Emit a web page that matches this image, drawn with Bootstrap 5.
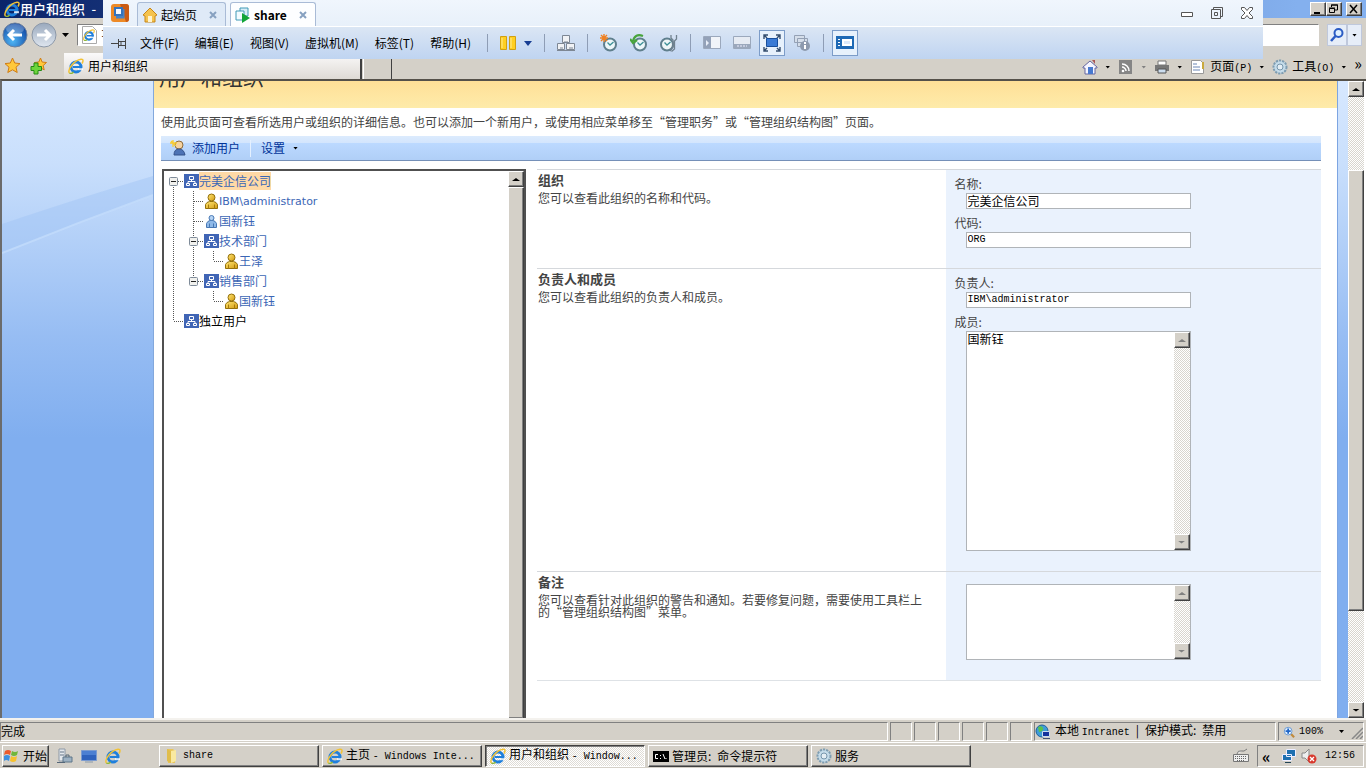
<!DOCTYPE html>
<html lang="zh-CN">
<head>
<meta charset="utf-8">
<meta name="viewport" content="width=device-width, initial-scale=1">
<title>用户和组织 - Windows Internet Explorer</title>
<link href="https://cdn.jsdelivr.net/npm/bootstrap@5.3.0/dist/css/bootstrap.min.css" rel="stylesheet">
<style>
  body { font: 12px/16px "Noto Sans CJK SC", "Liberation Sans", sans-serif; color: #000; background: #d4d0c8; }
  a { text-decoration: none; color: inherit; }
  svg { display: block; flex: none; }
  button { font: inherit; color: inherit; padding: 0; border: 0; background: none; flex: none; }
  input, textarea, select { font: inherit; color: #000; border: 0; outline: 0; border-radius: 0; resize: none; }
  .mono { font-family: "Liberation Mono", "Noto Sans CJK SC", monospace; font-size: 10px; }
  .ico { width: 16px; height: 16px; }
  .caret { width: 5px; height: 3px; background: currentColor; clip-path: polygon(0 0, 100% 0, 50% 100%); flex: none; }

  /* classic raised and sunken edges */
  .raised { background: #d4d0c8; border: 1px solid; border-color: #fff #404040 #404040 #fff; box-shadow: inset -1px -1px #808080; }
  .pressed { background: repeating-conic-gradient(#fff 0 25%, #dedbd5 0 50%) 0 0/2px 2px; border: 1px solid; border-color: #404040 #fff #fff #404040; box-shadow: inset 1px 1px #808080; }
  .sunken { border: 1px solid; border-color: #808080 #fff #fff #808080; }

  /* browser chrome */
  .titlebar { height: 18px; background: linear-gradient(90deg, #0a246a, #84b0ee 95%); color: #fff; font-size: 13px; font-weight: 500; line-height: 18px; }
  .capbtn { width: 16px; height: 14px; }
  .addressrow { height: 34px; }
  .address { width: 160px; height: 22px; }
  .searchbox { width: 150px; height: 22px; background: #fff; }
  .searchbtn { height: 22px; border: 1px solid #bfc8dc; background: #e6edf8; }
  .tabrow { height: 27px; }
  .pagetab { width: 298px; height: 26px; background: linear-gradient(#fbfafa, #dedad5); border-right: 2px solid #404040; }
  .newtab { width: 29px; height: 26px; margin-left: 1px; border-left: 1px solid #fff; border-right: 1px solid #404040; }
  .commands { padding-top: 3px; }
  .commands .caret { margin: 0 8px 0 7px; }

  /* virtual machine bar floating above the browser */
  .vmbar { left: 103px; right: 103px; top: 0; height: 59px; z-index: 5; background: linear-gradient(#f0f6fd, #dde9f6); }
  .vmtop { height: 26px; }
  .vmtab { height: 24px; border: 1px solid #a9bbd6; border-bottom: 0; border-radius: 3px 3px 0 0; background: #dfeaf7; gap: 3px; }
  .vmtab button { margin-left: 9px; }
  .vmtab.current { background: #fdfeff; }
  .vmtools { height: 33px; border-top: 1px solid #fff; background: linear-gradient(#dbe6f4, #bfd4f1); gap: 12px; }
  .vmsep { width: 1px; height: 18px; background: #8e9db5; flex: none; }
  .vmon { width: 26px; height: 26px; margin: 0 -4px; background: #e7f1fc; border: 1px solid #7c9cc8; }
  .vmwin { gap: 18px; margin-right: 10px; }

  /* page */
  .viewport { border-top: 2px solid #55514a; border-left: 2px solid #6b6b6b; background: #fff; padding-right: 2px; }
  .backdrop { background: linear-gradient(#d7e8ff 0, #c9dffc 13%, #97bdf3 40%, #80aeef 56%, #80aeef); padding-right: 10px; }
  .aside { width: 151px; }
  .sheet { background: #fff; border-left: 1px solid #83a8dc; border-right: 1px solid #7da5e2; }
  .banner { height: 27px; background: linear-gradient(#ffe097, #feebaa); overflow: hidden; padding-left: 5px; }
  .banner h1 { font-size: 21px; line-height: 26px; font-weight: 400; margin-top: -18px; color: #333; }
  .inner { padding: 6px 16px 0 7px; color: #444; }
  .toolbar { height: 25px; margin-top: 6px; background: linear-gradient(#dcebfd 0, #d3e5fd 7px, #bcd9ff 7px, #b0cff7 100%); border-bottom: 1px solid #7590b8; color: #003399; padding-left: 9px; gap: 6px; }
  .toolsep { width: 1px; height: 17px; background: #e4f0ff; margin: 0 4px; }
  .panes { gap: 11px; padding-left: 1px; }
  .treebox { flex: 0 0 364px; border: 2px solid #505050; border-bottom: 0; color: #3b66b5; }
  .branch { height: 20px; }
  .branch a { line-height: 18px; }
  .branch .verd { font-family: "DejaVu Sans", sans-serif; font-size: 11px; padding-top: 2px; }
  .branch .chosen { background: #ffd9a6; }
  .cell { width: 20px; height: 20px; }
  .node { width: 15px; height: 16px; }
  .sbar { width: 16px; background: repeating-conic-gradient(#fff 0 25%, #d8d5ce 0 50%) 0 0/2px 2px; flex: none; }
  .sbar button { width: 16px; height: 16px; display: flex; align-items: center; justify-content: center; }
  .up { transform: rotate(180deg); }
  .dim { color: #808080; }
  .section { display: grid; grid-template-columns: 408fr 375fr; border-top: 1px solid #d5d8dc; }
  .section h2 { font-size: 13px; line-height: 18px; font-weight: 700; margin: 1px 0 3px; }
  .section p { line-height: 12px; margin: 0; }
  .about { padding: 0 16px 0 1px; }
  .fields { background: #eaf2fd; padding: 5px 0 20px 9px; }
  .fields label { display: block; line-height: 18px; height: 18px; }
  .box { width: 225px; margin: 0 0 5px 11px; border: 1px solid #b0b4b8; background: #fff; height: 16px; }
  .box input, .box textarea { width: 100%; padding: 0 1px; line-height: 14px; height: 14px; display: block; }
  .box textarea { height: 100%; overflow: hidden; }
  .members { height: 220px; margin-bottom: 0; }
  .notes { height: 76px; margin: 7px 0 0 11px; }

  /* bottom bars */
  .status { height: 24px; border-top: 2px solid #f4f2ee; padding: 2px 2px 2px 0; gap: 2px; }
  .status .sunken { height: 19px; }
  .pane { width: 22px; }
  .taskbar { height: 26px; border-top: 1px solid #fff; padding: 1px 2px; }
  .tasks { gap: 3px; margin-left: 38px; }
  .task { width: 160px; height: 22px; gap: 3px; padding-left: 4px; text-align: left; }
</style>
</head>
<body class="vh-100 d-flex flex-column overflow-hidden position-relative">

<svg class="position-absolute" width="0" height="0" aria-hidden="true">
  <defs>
    <radialGradient id="blu" cx=".4" cy=".75" r=".8"><stop offset="0" stop-color="#4fb6f5"/><stop offset="1" stop-color="#0d3f9c"/></radialGradient>
    <linearGradient id="gry" x2="0" y2="1"><stop offset="0" stop-color="#9aa9bd"/><stop offset="1" stop-color="#dfe6ef"/></linearGradient>
    <linearGradient id="gold" x2="1" y2="1"><stop offset="0" stop-color="#ffe774"/><stop offset="1" stop-color="#d49a10"/></linearGradient>
  </defs>
  <symbol id="ie" viewBox="0 0 16 16"><circle cx="8" cy="9" r="5" fill="none" stroke="#1f7fdc" stroke-width="3"/><path d="M5 9h9" stroke="#1f7fdc" stroke-width="2"/><path d="M10 10.200h5v2h-5z" fill="#fff" opacity=".8"/><path d="M1.500 15C-1 12 6 2 13 1.200c3-.2 2 2.600 1 4.300" fill="none" stroke="#f2c235" stroke-width="1.500"/><path d="M1.500 15c1 .8 3 0 4-1" fill="none" stroke="#8fb83b" stroke-width="1.500"/></symbol>
  <symbol id="folder" viewBox="0 0 16 16"><path d="M3 1h6l2 2v12H4z" fill="#e9c65a"/><path d="M7 3l5-1v11l-5 2z" fill="#f9e9a0"/><path d="M3 1l4 2v12l-4-2z" fill="#e0bd4c"/></symbol>
  <symbol id="gear" viewBox="0 0 16 16"><circle cx="8" cy="8" r="6.500" fill="#c5dcea" stroke="#7e9db2" stroke-width="2" stroke-dasharray="2.200 1"/><circle cx="8" cy="8" r="3" fill="#e4eef4" stroke="#7796ac"/></symbol>
  <symbol id="org" viewBox="0 0 15 16"><path d="M0 1h15v14H0z" fill="#4065b5"/><path d="M5.500 3.500h4v3h-4zM2.500 10.500h3v2h-3zM9.500 10.500h3v2h-3zM7.500 6.500v2M4 10.500v-2h7v2" fill="none" stroke="#fff"/></symbol>
  <symbol id="man" viewBox="0 0 15 16"><path d="M1.500 15.500v-4Q2.500 9 5.500 8.500h4Q12.500 9 13.500 11.500v4z" fill="url(#gold)" stroke="#93700c"/><path d="M4.500 11.500v4M10.500 11.500v4" stroke="#a67c10"/><circle cx="7.500" cy="4.500" r="3.500" fill="url(#gold)" stroke="#93700c"/></symbol>
  <symbol id="man2" viewBox="0 0 15 16"><path d="M2.500 14.500v-4Q3.500 8 6 7.500h3q2.500 .5 3.500 3v4z" fill="#8fb9e8" stroke="#4878b4"/><path d="M5.500 10.500v4M9.500 10.500v4" stroke="#4878b4"/><circle cx="7.500" cy="5" r="2.500" fill="#b5d3f3" stroke="#4878b4"/></symbol>
  <symbol id="tv" viewBox="0 0 20 20"><path d="M9.500 0v20" stroke="#555" stroke-dasharray="1 1"/></symbol>
  <symbol id="tt" viewBox="0 0 20 20"><path d="M9.500 0v20M10 10.500h9" stroke="#555" stroke-dasharray="1 1"/></symbol>
  <symbol id="tl" viewBox="0 0 20 20"><path d="M9.500 0v10M10 10.500h9" stroke="#555" stroke-dasharray="1 1"/></symbol>
  <symbol id="tm" viewBox="0 0 20 20"><path d="M9.500 0v20M10 10.500h10" stroke="#555" stroke-dasharray="1 1"/><rect x="5.500" y="6.500" width="8" height="8" rx="1" fill="#f1f1ee" stroke="#7e8b99"/><path d="M7 10.500h5" stroke="#222"/></symbol>
  <symbol id="tmtop" viewBox="0 0 20 20"><path d="M9.500 14v6M10 10.500h10" stroke="#555" stroke-dasharray="1 1"/><rect x="5.500" y="6.500" width="8" height="8" rx="1" fill="#f1f1ee" stroke="#7e8b99"/><path d="M7 10.500h5" stroke="#222"/></symbol>
  <symbol id="tmend" viewBox="0 0 20 20"><path d="M9.500 0v6M10 10.500h10" stroke="#555" stroke-dasharray="1 1"/><rect x="5.500" y="6.500" width="8" height="8" rx="1" fill="#f1f1ee" stroke="#7e8b99"/><path d="M7 10.500h5" stroke="#222"/></symbol>
  <symbol id="clock" viewBox="0 0 18 18"><circle cx="10" cy="10.500" r="6" fill="#edf6f8" stroke="#5f7f8d" stroke-width="2"/><path d="M7.500 8.500l2.500 2.500 3.500-3" fill="none" stroke="#3c9096" stroke-width="1.300"/></symbol>
</svg>

<!-- browser title, address and tab rows -->
<header class="flex-shrink-0">
  <div class="titlebar d-flex align-items-center ps-1">
    <svg class="ico"><use href="#ie"/></svg><span class="flex-fill">用户和组织&ensp;-</span>
    <div class="d-flex pe-1 text-black">
      <button class="raised capbtn" aria-label="最小化"><svg width="13" height="12"><path d="M3 9h6v2H3z"/></svg></button>
      <button class="raised capbtn me-1" aria-label="还原"><svg width="13" height="12"><path d="M4.500 4V2h6v5H8M4 2h7M2.500 5.500h5v4h-5zM2 5h6" fill="none" stroke="#000"/></svg></button>
      <button class="raised capbtn" aria-label="关闭"><svg width="13" height="12"><path d="M3 2l7 8M10 2l-7 8" stroke="#000" stroke-width="1.500"/></svg></button>
    </div>
  </div>
  <div class="addressrow d-flex align-items-center">
    <button aria-label="后退"><svg width="30" height="28"><circle cx="15" cy="14" r="12" fill="url(#blu)" stroke="#6c809d"/><ellipse cx="15" cy="8" rx="9" ry="5" fill="#fff" opacity=".25"/><path d="M22 14H9m5-5l-5 5 5 5" fill="none" stroke="#fff" stroke-width="3"/></svg></button>
    <button aria-label="前进"><svg width="28" height="28"><circle cx="14" cy="14" r="12" fill="url(#gry)" stroke="#8c98a8"/><path d="M7 14h13m-5-5l5 5-5 5" fill="none" stroke="#fff" stroke-width="3"/></svg></button>
    <svg class="ms-1 me-2" width="7" height="4"><path d="M0 0h7L3.500 4z"/></svg>
    <div class="address sunken bg-white d-flex align-items-center ps-1">
      <svg width="15" height="18"><path d="M.5.5h10l4 4v13H.5z" fill="#fff" stroke="#aaa"/><use href="#ie" x="1" y="3" width="12" height="12"/></svg>
      <input class="mono w-75 ps-1" aria-label="地址" value="I">
    </div>
    <input class="searchbox sunken ms-auto" aria-label="搜索">
    <button class="searchbtn ms-2" aria-label="搜索"><svg width="18" height="18"><circle cx="10.500" cy="7" r="4" fill="#dff0ff" stroke="#2a5bc4" stroke-width="2"/><path d="M7.500 10L3 15" stroke="#2a5bc4" stroke-width="2.500"/></svg></button>
    <button class="searchbtn px-1 me-1" aria-label="搜索选项"><span class="caret d-block"></span></button>
  </div>
  <div class="tabrow d-flex align-items-center ps-1">
    <svg width="18" height="18"><path d="M8.500 1l2.200 5 5.300.6-4 3.600 1.200 5.300-4.700-2.700-4.700 2.700L5 10.200 1 6.600 6.300 6z" fill="#ffc83a" stroke="#d07c14"/></svg>
    <svg class="ms-2" width="18" height="18"><path d="M10.500 1l1.600 4 4.400.5-3.300 3 1 4.400-3.700-2.200-3.800 2.200 1-4.400-3.200-3L8.800 5z" fill="#ffc83a" stroke="#d07c14"/><path d="M4 6h4v3.500h3.500v4H8V17H4v-3.500H1v-4h3z" fill="#6ed53c" stroke="#258b14"/></svg>
    <div class="pagetab d-flex align-items-center ms-3 ps-1"><svg class="ico me-1"><use href="#ie"/></svg><a href="#">用户和组织</a></div>
    <div class="newtab"></div>
    <nav class="commands d-flex align-items-center ms-auto" aria-label="命令栏">
      <svg class="ico"><path d="M1 8l7-6 7 6v1h-2v6H3V9H1z" fill="#f5f5ff" stroke="#6567a0"/><path d="M6 8h5v7H6z" fill="#4779cf"/><path d="M10 1h3v4" fill="#a55"/></svg><span class="caret"></span>
      <svg class="ico"><path d="M1 1h13v14H1z" fill="#858585"/><path d="M4 5c4 0 7 3 7 7M4 8c2 0 4 2 4 4" stroke="#fff" stroke-width="1.500" fill="none"/><circle cx="5" cy="12" r="1.300" fill="#fff"/></svg><span class="caret dim"></span>
      <svg class="ico"><path d="M4 2h8v4H4z" fill="#fff" stroke="#777"/><path d="M1 6h14v6H1z" fill="#777"/><path d="M4 10h8v4H4z" fill="#cde" stroke="#555"/></svg><span class="caret"></span>
      <svg class="ico"><path d="M1.500 1.500h9l3 3v10h-12z" fill="#fff" stroke="#999"/><path d="M3 5h4M3 8h7M3 11h7" stroke="#6b86b5"/><path d="M13 3v7" stroke="#c9a93e" stroke-width="2"/></svg>
      <a href="#" class="ps-1">页面<span class="mono">(P)</span></a><span class="caret"></span>
      <svg class="ico"><use href="#gear"/></svg>
      <a href="#" class="ps-1">工具<span class="mono">(O)</span></a><span class="caret"></span>
      <span class="pe-1 pb-2 fs-6 lh-1">»</span>
    </nav>
  </div>
</header>

<!-- virtual machine window bar -->
<section class="vmbar position-absolute" aria-label="虚拟机工具栏">
  <div class="vmtop d-flex align-items-end">
    <svg class="align-self-center ms-2" width="18" height="18"><rect x="0" y="0" width="18" height="18" rx="3" fill="#ed8a27"/><path d="M9 0h6q3 0 3 3v12q0 3-3 3" fill="#ca5b14"/><path d="M12 5v8H5" fill="none" stroke="#4983c4" stroke-width="3"/><path d="M4 4h7v7H4z" fill="#f7faff" stroke="#3473bc" stroke-width="2"/></svg>
    <div class="vmtab d-flex align-items-center ps-1 pe-2 ms-2">
      <svg class="ico"><path d="M1 8l7-7 7 7-2 1v6H3V9z" fill="#f5c34e" stroke="#c7871a"/><path d="M6 9h4v6H6z" fill="#fff3cf"/></svg><a href="#">起始页</a>
      <button aria-label="关闭"><svg width="8" height="8"><path d="M1 1l6 6M7 1L1 7" stroke="#87a1c0" stroke-width="2"/></svg></button>
    </div>
    <div class="vmtab current d-flex align-items-center ps-1 pe-2 ms-1">
      <svg class="ico"><path d="M5 1h8v8H5z" fill="#d9eef8" stroke="#409ab6"/><path d="M1 4h8v9H1z" fill="#f2fbff" stroke="#409ab6"/><path d="M7 6l8 5-8 5z" fill="#12a537"/></svg><a href="#" class="fw-bold">share</a>
      <button aria-label="关闭"><svg width="8" height="8"><path d="M1 1l6 6M7 1L1 7" stroke="#87a1c0" stroke-width="2"/></svg></button>
    </div>
    <div class="vmwin d-flex ms-auto align-self-center">
      <button aria-label="最小化"><svg width="12" height="12"><path d="M.5 5.500h11v4H.5z" fill="#fff" stroke="#555"/></svg></button>
      <button aria-label="还原"><svg width="12" height="12"><path d="M2.500 2V.5h9v9H10M.5 2.500h9v9h-9zM3.500 5.500h3v3h-3z" fill="none" stroke="#555"/></svg></button>
      <button aria-label="关闭"><svg width="12" height="12"><path d="M.5.500h3L6 3.500 8.500.5h3v2L8 6l3.500 3.500v2h-3L6 8.500 3.500 11.500h-3v-2L4 6 .5 2.500z" fill="#fff" stroke="#555"/></svg></button>
    </div>
  </div>
  <div class="vmtools d-flex align-items-center ps-2">
    <svg width="17" height="12"><path d="M0 6.500h7M7.500 2v9M8 4.500h6M8 8.500h6M14.500 1v11M10 5v3" fill="none" stroke="#444"/></svg>
    <nav class="d-flex gap-3 pe-1" aria-label="菜单">
      <a href="#">文件(F)</a><a href="#">编辑(E)</a><a href="#">视图(V)</a><a href="#">虚拟机(M)</a><a href="#">标签(T)</a><a href="#">帮助(H)</a>
    </nav>
    <span class="vmsep"></span>
    <button class="d-flex align-items-center gap-2" aria-label="挂起"><svg width="16" height="16"><path d="M.5 1.500h6v13h-6zM9.500 1.500h6v13h-6z" fill="#ffcf22" stroke="#d0a012"/><path d="M2 3v10M11 3v10" stroke="#ffeb92"/></svg><svg width="8" height="5"><path d="M0 0h8L4 5z" fill="#173d93"/></svg></button>
    <span class="vmsep"></span>
    <button aria-label="发送键"><svg width="18" height="16"><path d="M5.500.5h7v7h-7zM.5 8.500h7v6h-7zM9.500 8.500h8v6h-8z" fill="#f0f2f5" stroke="#7d8794"/><path d="M0 15.500h18M7 7h4M3 13h3M12 13h4" stroke="#7d8794"/></svg></button>
    <span class="vmsep"></span>
    <button aria-label="拍摄快照"><svg width="18" height="18"><use href="#clock"/><path d="M4 0v8M0 4h8M1 1l6 6M7 1L1 7" stroke="#ef8122" stroke-width="1.400"/></svg></button>
    <button aria-label="恢复快照"><svg width="18" height="18"><use href="#clock"/><path d="M13 2Q5-1 3 7M0 5l3 4 4-3" fill="none" stroke="#48a43c" stroke-width="2.200"/></svg></button>
    <button aria-label="管理快照"><svg width="18" height="18"><use href="#clock" width="18" height="18" x="-3"/><path d="M11 1v3l2 2v7l-3 4M16.500 1v4l-2 2v8l-3 2.500" fill="none" stroke="#70818e" stroke-width="1.300"/></svg></button>
    <span class="vmsep"></span>
    <button aria-label="显示库"><svg width="18" height="14"><path d="M.5.500h17v12H.5z" fill="#f1f4f9" stroke="#9ba8bc"/><path d="M1 1h7v11H1z" fill="#93a1b8"/><path d="M3 4l3 3-3 3z" fill="#e8eef7"/></svg></button>
    <button aria-label="缩略图栏"><svg width="18" height="14"><path d="M.5.500h17v12H.5z" fill="#e6ebf3" stroke="#9ba8bc"/><path d="M1 8h16v5H1z" fill="#9ba8bc"/><path d="M4 10h10" stroke="#eef" stroke-dasharray="2 1"/></svg></button>
    <button class="vmon d-flex align-items-center justify-content-center" aria-label="全屏"><svg width="18" height="18"><path d="M1 5V1h4M13 1h4v4M17 13v4h-4M5 17H1v-4M1 1l3 3M17 1l-3 3M17 17l-3-3M1 17l3-3" fill="none" stroke="#344d6e" stroke-width="1.400"/><path d="M3.500 4.500h11v8h-11z" fill="#3b7bd5" stroke="#184e9b"/></svg></button>
    <button aria-label="Unity"><svg width="18" height="18"><path d="M1.500 1.500h10v7h-10zM4.500 4.500h10v8h-10z" fill="#d5deea" stroke="#94a1b5"/><circle cx="12" cy="12" r="5" fill="#8d9aae"/><path d="M12 8v2M12 11v4" stroke="#fff" stroke-width="2"/></svg></button>
    <span class="vmsep"></span>
    <button class="vmon d-flex align-items-center justify-content-center" aria-label="控制台"><svg width="18" height="14"><path d="M0 0h18v13H0z" fill="#1e69b5"/><path d="M6 3h10v7H6z" fill="#fff"/><path d="M2 3h2v1H2zM2 6h2v1H2zM2 9h2v1H2z" fill="#fff"/><path d="M8 5h6v3H8z" fill="#dbe9fa"/></svg></button>
  </div>
</section>

<!-- page -->
<div class="viewport d-flex flex-fill overflow-hidden">
  <div class="backdrop d-flex flex-fill overflow-hidden">
    <div class="aside flex-shrink-0">
      <svg width="151" height="180" viewBox="0 0 151 180"><path d="M0 143Q80 116 151 95V114Q75 142 0 172z" fill="#9fc4f3" opacity=".45"/><path d="M0 172Q75 142 151 114" fill="none" stroke="#c3dcfb" stroke-width="2" opacity=".8"/></svg>
    </div>
    <main class="sheet d-flex flex-column flex-fill">
      <div class="banner flex-shrink-0"><h1>用户和组织</h1></div>
      <div class="inner d-flex flex-column flex-fill overflow-hidden">
        <div>使用此页面可查看所选用户或组织的详细信息。也可以添加一个新用户，或使用相应菜单移至“管理职务”或“管理组织结构图”页面。</div>
        <div class="toolbar d-flex align-items-center flex-shrink-0">
          <svg class="ico"><circle cx="9" cy="5" r="4" fill="#f6d3a0" stroke="#8d6b3c"/><path d="M4 15q0-6 5-6t6 6z" fill="#4d73b5" stroke="#35528a"/><path d="M3 0v7M0 3h7M1 1l5 5" stroke="#f8cc35" stroke-width="1.300"/></svg>
          <a href="#">添加用户</a><span class="toolsep"></span><a href="#" class="d-flex align-items-center">设置<span class="caret text-black ms-2"></span></a>
        </div>
        <div class="panes d-flex flex-fill overflow-hidden mt-2">
          <div class="treebox d-flex">
            <div class="flex-fill">
              <div class="branch d-flex align-items-center"><svg class="cell"><use href="#tmtop"/></svg><svg class="node"><use href="#org"/></svg><a href="#" class="chosen">完美企信公司</a></div>
              <div class="branch d-flex align-items-center"><svg class="cell"><use href="#tv"/></svg><svg class="cell"><use href="#tt"/></svg><svg class="node"><use href="#man"/></svg><a href="#" class="verd">IBM\administrator</a></div>
              <div class="branch d-flex align-items-center"><svg class="cell"><use href="#tv"/></svg><svg class="cell"><use href="#tt"/></svg><svg class="node"><use href="#man2"/></svg><a href="#">国新钰</a></div>
              <div class="branch d-flex align-items-center"><svg class="cell"><use href="#tv"/></svg><svg class="cell"><use href="#tm"/></svg><svg class="node"><use href="#org"/></svg><a href="#">技术部门</a></div>
              <div class="branch d-flex align-items-center"><svg class="cell"><use href="#tv"/></svg><svg class="cell"><use href="#tv"/></svg><svg class="cell"><use href="#tl"/></svg><svg class="node"><use href="#man"/></svg><a href="#">王泽</a></div>
              <div class="branch d-flex align-items-center"><svg class="cell"><use href="#tv"/></svg><svg class="cell"><use href="#tmend"/></svg><svg class="node"><use href="#org"/></svg><a href="#">销售部门</a></div>
              <div class="branch d-flex align-items-center"><svg class="cell"><use href="#tv"/></svg><span class="cell"></span><svg class="cell"><use href="#tl"/></svg><svg class="node"><use href="#man"/></svg><a href="#">国新钰</a></div>
              <div class="branch d-flex align-items-center"><svg class="cell"><use href="#tl"/></svg><svg class="node"><use href="#org"/></svg><a href="#" class="text-black">独立用户</a></div>
            </div>
            <div class="sbar d-flex flex-column text-black"><button class="raised" aria-label="向上滚动"><span class="caret up px-1"></span></button><div class="raised flex-fill border-bottom-0"></div></div>
          </div>
          <form class="flex-fill">
            <div class="section">
              <div class="about"><h2>组织</h2><p>您可以查看此组织的名称和代码。</p></div>
              <div class="fields"><label for="nm">名称:</label><div class="box"><input id="nm" value="完美企信公司"></div><label for="cd">代码:</label><div class="box mb-0"><input id="cd" class="mono" value="ORG"></div></div>
            </div>
            <div class="section">
              <div class="about"><h2>负责人和成员</h2><p>您可以查看此组织的负责人和成员。</p></div>
              <div class="fields"><label for="ld">负责人:</label><div class="box"><input id="ld" class="mono" value="IBM\administrator"></div><label for="mb">成员:</label><div class="box members d-flex"><textarea id="mb">国新钰</textarea><div class="sbar dim d-flex flex-column justify-content-between"><button type="button" class="raised" aria-label="向上滚动"><span class="caret up px-1"></span></button><button type="button" class="raised" aria-label="向下滚动"><span class="caret px-1"></span></button></div></div></div>
            </div>
            <div class="section border-bottom">
              <div class="about"><h2>备注</h2><p>您可以查看针对此组织的警告和通知。若要修复问题，需要使用工具栏上的“管理组织结构图”菜单。</p></div>
              <div class="fields"><div class="box notes d-flex"><textarea aria-label="备注"></textarea><div class="sbar dim d-flex flex-column justify-content-between"><button type="button" class="raised" aria-label="向上滚动"><span class="caret up px-1"></span></button><button type="button" class="raised" aria-label="向下滚动"><span class="caret px-1"></span></button></div></div></div>
            </div>
          </form>
        </div>
      </div>
    </main>
  </div>
  <div class="sbar d-flex flex-column"><button class="raised" aria-label="向上滚动"><span class="caret up px-1"></span></button><div class="h-100 d-flex flex-column"><div style="height:12%"></div><div class="raised" style="height:73%"></div></div><button class="raised" aria-label="向下滚动"><span class="caret px-1"></span></button></div>
</div>

<!-- status bar -->
<div class="status d-flex flex-shrink-0">
  <div class="sunken flex-fill">完成</div>
  <div class="sunken pane"></div><div class="sunken pane"></div><div class="sunken pane"></div><div class="sunken pane"></div><div class="sunken pane"></div><div class="sunken pane"></div>
  <div class="sunken d-flex align-items-center" style="width:242px">
    <svg class="ico me-1"><circle cx="7" cy="7" r="6" fill="#3e9dd8" stroke="#1d5f9e"/><path d="M3 3q4-2 5 1t-4 4z" fill="#5ac24c"/><path d="M7.500 7.500h7v5h-7z" fill="#15329c" stroke="#cde"/><path d="M8 14.500h7" stroke="#457"/></svg>
    <span>本地 <span class="mono">Intranet</span>&ensp;|&ensp;保护模式:&ensp;禁用</span>
  </div>
  <div class="sunken d-flex align-items-center ps-1" style="width:86px">
    <svg class="me-1" width="12" height="16" viewBox="0 0 14 16"><path d="M9 10l4 4" stroke="#c08a3c" stroke-width="2.500"/><circle cx="6" cy="7" r="4.500" fill="#e3f2ff" stroke="#5d8fcc"/><path d="M6 4v6M3 7h6" stroke="#1f65c8" stroke-width="2"/></svg>
    <button class="mono d-flex align-items-center flex-fill" aria-label="缩放">100%<span class="caret ms-3"></span></button>
    <svg width="12" height="14"><path d="M1 14L12 3M5 14l7-7M9 14l3-3" stroke="#888" stroke-width="1.500"/></svg>
  </div>
</div>

<!-- taskbar -->
<footer class="taskbar d-flex align-items-center flex-shrink-0">
  <button class="raised d-flex align-items-center" style="width:47px;height:22px"><svg class="ico"><path d="M2 3q3-2 6 0L7 7Q4 5 1 7z" fill="#ec5a2c"/><path d="M9 3q3 2 6 0l-1 4q-3 2-6 0z" fill="#71b73b"/><path d="M1 8q3-2 6 0l-1 5q-3-2-5 0z" fill="#3e8fdf"/><path d="M8 8q3 2 6 0l-1 5q-3 2-6 0z" fill="#f6c12f"/></svg><span class="ms-1">开始</span></button>
  <div class="d-flex gap-2 ms-2">
    <svg class="ico"><path d="M2 1h6v12H2z" fill="#e4e8ec" stroke="#8c98a6"/><path d="M3 4h4M3 7h4" stroke="#678"/><path d="M6 9h9v5H6z" fill="#9db1c2" stroke="#5f7689"/><path d="M9 9V7h3v2M0 14.500h8" fill="none" stroke="#567"/></svg>
    <svg class="ico"><path d="M.5 2.500h15v10H.5z" fill="#2f62bd" stroke="#7b9bd0"/><path d="M1 3h14v4H1z" fill="#6093df" opacity=".6"/><path d="M4 14h8" stroke="#89a"/></svg>
    <svg class="ico"><use href="#ie"/></svg>
  </div>
  <div class="tasks d-flex">
    <button class="raised task d-flex align-items-center"><svg class="ico"><use href="#folder"/></svg><span class="mono">share</span></button>
    <button class="raised task d-flex align-items-center"><svg class="ico"><use href="#ie"/></svg><span>主页 <span class="mono">- Windows Inte...</span></span></button>
    <button class="pressed task d-flex align-items-center"><svg class="ico"><use href="#ie"/></svg><span>用户和组织 <span class="mono">- Window...</span></span></button>
    <button class="raised task d-flex align-items-center"><svg class="ico"><path d="M0 3h16v11H0z"/><path d="M5 6.500H2.500v4H5M7.500 7v1M7.500 10v1M10 6l2 5M13 10v1" fill="none" stroke="#fff"/></svg><span>管理员:&ensp;命令提示符</span></button>
    <button class="raised task d-flex align-items-center"><svg class="ico"><use href="#gear"/></svg><span>服务</span></button>
  </div>
  <svg class="ico ms-auto me-2"><path d="M.5 6.500h15v7H.5zM4 6q1-4 4-3t6-2" fill="#eee" stroke="#777"/><path d="M2 8.500h12M2 10.500h12M4 12.500h8" stroke="#666" stroke-dasharray="1 1"/></svg>
  <div class="sunken d-flex align-items-center ps-1" style="width:107px;height:22px">
    <span class="fw-bold fs-6 lh-1 me-auto">«</span>
    <svg class="ico"><path d="M5.500 1.500h9v7h-9zM1.500 6.500h9v6h-9z" fill="#1d6fb0" stroke="#eef"/><path d="M4 14.500h6" stroke="#245"/></svg>
    <svg class="ico mx-1"><path d="M1 5h3l4-4v13l-4-4H1z" fill="#eee" stroke="#888"/><circle cx="11" cy="11" r="4.500" fill="#d8392d"/><path d="M9 9l4 4M13 9l-4 4" stroke="#fff" stroke-width="1.300"/></svg>
    <time class="mono mx-1 pe-1">12:56</time>
  </div>
</footer>

<script src="https://cdn.jsdelivr.net/npm/bootstrap@5.3.0/dist/js/bootstrap.bundle.min.js"></script>
</body>
</html>
